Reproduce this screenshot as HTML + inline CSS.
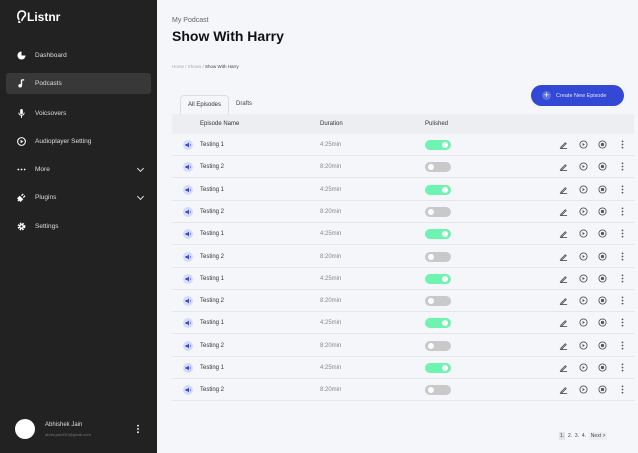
<!DOCTYPE html>
<html><head><style>
*{margin:0;padding:0;box-sizing:border-box}
body{width:638px;height:453px;overflow:hidden;background:#f5f6fa;font-family:"Liberation Sans",sans-serif;position:relative}
.sb{position:absolute;left:0;top:0;width:157px;height:453px;background:#222}
.sb .it{position:absolute;left:6px;width:145px;height:21px;color:#ddd;font-size:6.5px;line-height:21px;padding-left:29px;border-radius:3px}
.sb .it.act{background:#383838}
.ic{position:absolute;left:11px;top:6px;width:9px;height:9px}
.chev{position:absolute;right:8px;top:7px;width:5px;height:5px;border-right:1.3px solid #ddd;border-bottom:1.3px solid #ddd;transform:rotate(45deg)}
.row{position:absolute;left:172px;width:462px;height:22px;border-bottom:1px solid #e4e6ea;font-size:6px;color:#333}
.row span{position:absolute;top:8px}
.tg{position:absolute;left:253px;top:6px;width:26px;height:10px;border-radius:5px;background:#c9c9c9}
.tg.on{background:#6ef3b0}
.tg::after{content:"";position:absolute;top:2px;width:6px;height:6px;border-radius:50%;background:#fff;left:3px}
.tg.on::after{left:17px}
.spk{position:absolute;left:11px;top:6px;width:10px;height:10px;border-radius:50%;background:#d6dcfa}
.ac{position:absolute;top:6px;width:9px;height:9px}
</style></head><body>
<div class="sb">
 <div style="position:absolute;left:17px;top:10px;color:#fff;font-weight:bold;font-size:12px">
  <svg width="10" height="13" viewBox="0 0 9 12" style="vertical-align:-2px"><path d="M2 10 Q1 12 3 11 M2 9 C0 7 0 1 4.5 1 C8 1 8.5 5 6 6.5 C5 7.5 5 9 4 10" stroke="#fff" stroke-width="1.5" fill="none"/></svg>Listnr</div>
 <div class="it" style="top:45px"><svg class="ic" viewBox="0 0 10 10"><circle cx="5" cy="5" r="4.5" fill="#fff"/><path d="M5 5V0A5 5 0 0 1 10 5Z" fill="#222"/></svg>Dashboard</div>
 <div class="it act" style="top:73px"><svg class="ic" viewBox="0 0 10 10"><path d="M5 1v6" stroke="#fff" stroke-width="1.5"/><circle cx="3.5" cy="7.5" r="2" fill="#fff"/><path d="M5 1h3" stroke="#fff" stroke-width="1.5"/></svg>Podcasts</div>
 <div class="it" style="top:103px"><svg class="ic" viewBox="0 0 10 10"><rect x="3.5" y="0" width="3" height="6" rx="1.5" fill="#fff"/><path d="M2 4a3 3 0 0 0 6 0M5 7v3" stroke="#fff" fill="none"/></svg>Voicsovers</div>
 <div class="it" style="top:131px"><svg class="ic" viewBox="0 0 10 10"><circle cx="5" cy="5" r="4.3" stroke="#fff" stroke-width="1.2" fill="none"/><path d="M4 3v4l3-2z" fill="#fff"/></svg>Audioplayer Setting</div>
 <div class="it" style="top:159px"><svg class="ic" viewBox="0 0 10 10"><circle cx="1.5" cy="5" r="1" fill="#fff"/><circle cx="5" cy="5" r="1" fill="#fff"/><circle cx="8.5" cy="5" r="1" fill="#fff"/></svg>More<div class="chev"></div></div>
 <div class="it" style="top:187px"><svg class="ic" viewBox="0 0 10 10"><path d="M1 9l2-2M3 4l3 3-2 2-3-3zM5 3l2-2M7 5l2-2" stroke="#fff" stroke-width="1.4" fill="#fff"/></svg>Plugins<div class="chev"></div></div>
 <div class="it" style="top:216px"><svg class="ic" viewBox="0 0 10 10"><circle cx="5" cy="5" r="3.2" stroke="#fff" stroke-width="2.2" stroke-dasharray="1.6 1" fill="none"/><circle cx="5" cy="5" r="2.6" fill="#fff"/><circle cx="5" cy="5" r="1.2" fill="#222"/></svg>Settings</div>
 <div style="position:absolute;left:15px;top:419px;width:20px;height:20px;border-radius:50%;background:#fff"></div>
 <div style="position:absolute;left:45px;top:422px;color:#ddd;font-size:6px">Abhishek Jain</div>
 <div style="position:absolute;left:45px;top:432px;color:#777;font-size:4px">abhis.jain330@gmail.com</div>
 <div style="position:absolute;left:137px;top:424px;width:2px;height:10px;background:radial-gradient(circle,#ddd 0.9px,transparent 1px) 0 0/2px 3.3px"></div>
</div>
<div style="position:absolute;left:172px;top:17px;font-size:7px;color:#666">My Podcast</div>
<div style="position:absolute;left:172px;top:28px;font-size:14px;font-weight:bold;color:#111">Show With Harry</div>
<div style="position:absolute;left:172px;top:64px;font-size:4.5px;color:#aaa">Home / Shows / <span style="color:#444">Show With Harry</span></div>
<div style="position:absolute;left:531px;top:85px;width:93px;height:21px;border-radius:11px;background:#3349d6;color:#dfe3ff;font-size:5.5px;display:flex;align-items:center;padding-left:11px">
 <div style="width:9px;height:9px;border-radius:50%;background:#5d70e6;color:#fff;font-size:9px;line-height:9px;text-align:center;margin-right:5px">+</div>Create New Episode</div>
<div style="position:absolute;left:180px;top:95px;width:49px;height:19px;border:1px solid #dcdde2;border-bottom:none;border-radius:4px 4px 0 0;background:#f5f6fa;font-size:6px;line-height:19px;text-align:center;color:#333">All Episodes</div>
<div style="position:absolute;left:236px;top:95px;font-size:6px;line-height:19px;color:#444">Drafts</div>
<div style="position:absolute;left:172px;top:114px;width:462px;height:20px;background:#eceef2;font-size:6px;color:#333">
 <span style="position:absolute;left:28px;top:7px">Episode Name</span><span style="position:absolute;left:148px;top:7px">Duration</span><span style="position:absolute;left:253px;top:7px">Pulished</span></div>
<div id="rows"></div>
<script>
var h='';for(var i=0;i<12;i++){var t=134+i*22.3,o=i%2==0;
h+='<div class="row" style="top:'+t+'px"><div class="spk"><svg width="10" height="10" viewBox="0 0 10 10" style="position:absolute;left:0;top:0"><path d="M2.5 4h1.5l2-1.5v5L4 6H2.5z" fill="#3a4fd8"/><path d="M7 3.8q.8 1.2 0 2.4" stroke="#3a4fd8" stroke-width=".6" fill="none"/></svg></div><span style="left:28px">Testing '+(o?1:2)+'</span><span style="left:148px;color:#888">'+(o?'4:25min':'8:20min')+'</span><div class="tg'+(o?' on':'')+'"></div>'+
'<svg class="ac" style="left:387px" viewBox="0 0 10 10"><path d="M2 8l5-5 1 1-5 5H2zM1 9.5h8" stroke="#555" fill="none"/></svg>'+
'<svg class="ac" style="left:407px" viewBox="0 0 10 10"><circle cx="5" cy="5" r="4" stroke="#555" fill="none"/><path d="M4 3.3v3.4L6.5 5z" fill="#555"/></svg>'+
'<svg class="ac" style="left:426px" viewBox="0 0 10 10"><circle cx="5" cy="5" r="4" stroke="#555" fill="none"/><circle cx="5" cy="5" r="1.8" fill="#555"/></svg>'+
'<svg class="ac" style="left:446px" viewBox="0 0 10 10"><circle cx="5" cy="1.5" r="1" fill="#555"/><circle cx="5" cy="5" r="1" fill="#555"/><circle cx="5" cy="8.5" r="1" fill="#555"/></svg></div>';}
document.getElementById('rows').innerHTML=h;
</script>
<div style="position:absolute;left:559px;top:433px;font-size:5px;color:#444">
 <span style="background:#e2e3e6;padding:1px 1px">1.</span>&nbsp; 2. &nbsp;3. &nbsp;4. &nbsp;<span style="background:#eceef1;padding:1px 2px">Next &gt;</span></div>
</body></html>
